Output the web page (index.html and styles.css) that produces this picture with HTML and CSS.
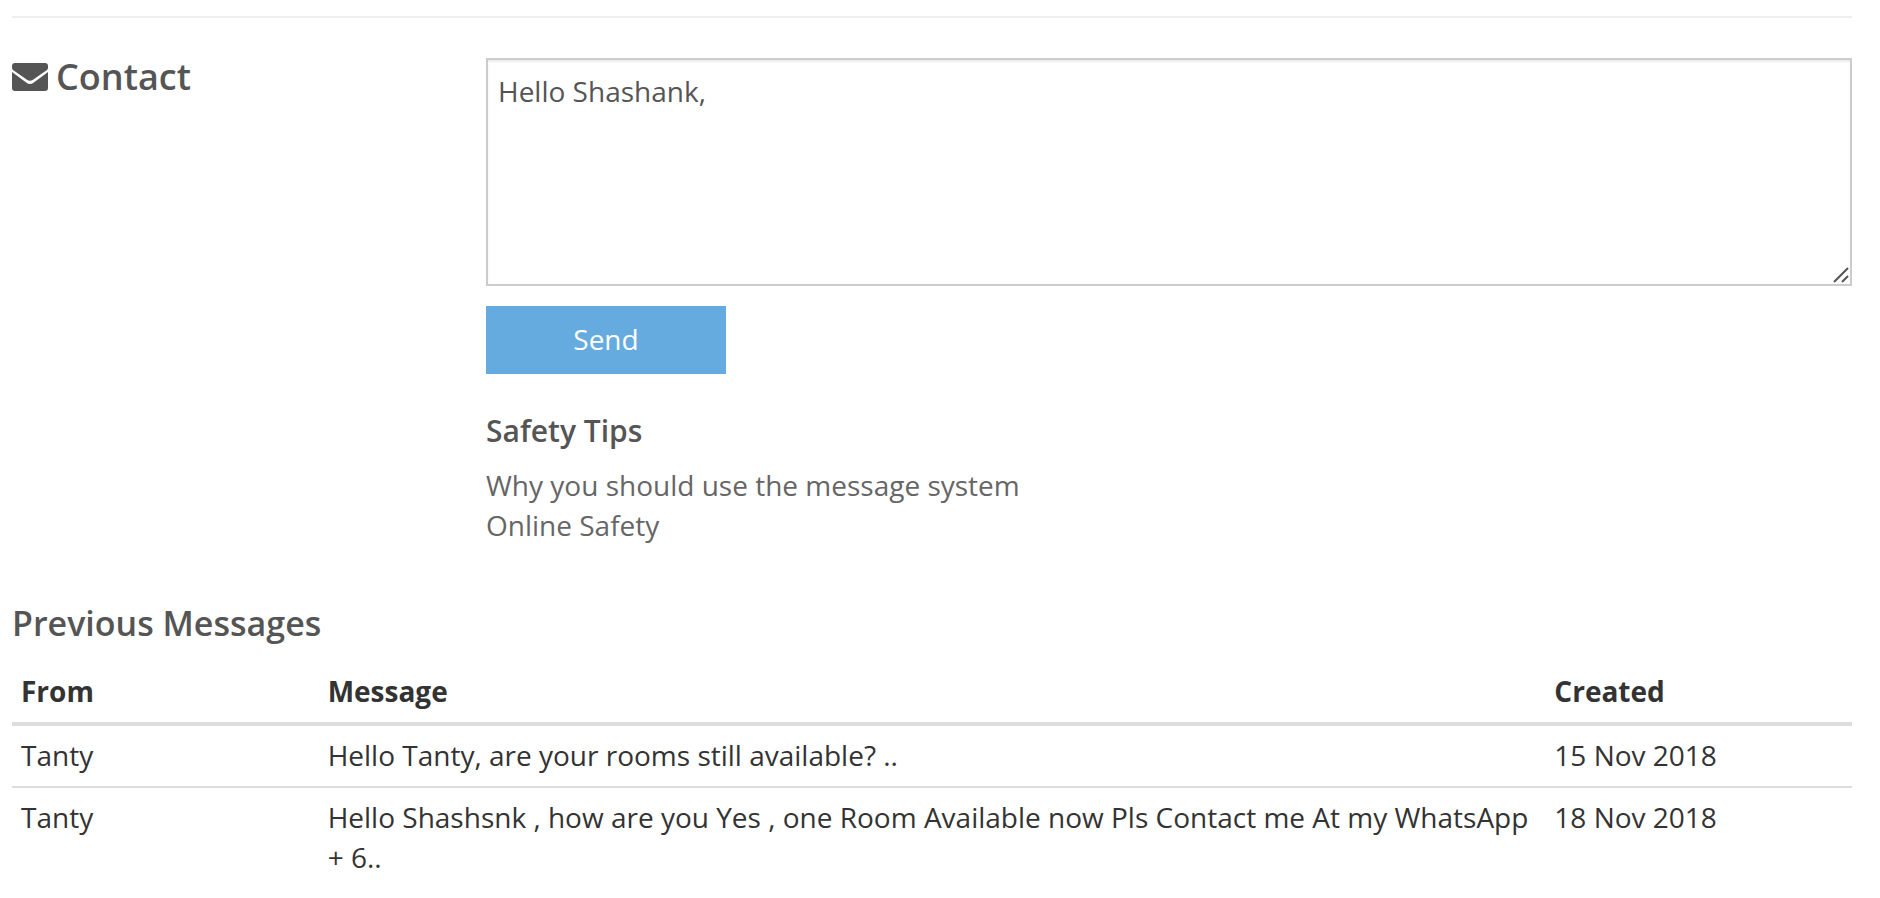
FILE: index.html
```
<!DOCTYPE html>
<html lang="en">
  <head>
    <meta charset="utf-8" />
    <meta name="viewport" content="width=device-width, initial-scale=1.0" />
    <title>Contact</title>
    <link rel="stylesheet" href="styles.css">
  </head>
  <body>
    <hr>
    <section class="contact">
      <h3 class="contact-title">
        <svg class="icon" viewBox="0 0 36 28" aria-hidden="true">
          <path d="M0 5V3Q0 0 3 0H33Q36 0 36 3V5Q36 6.200 35 7L21 16.800Q18 18.800 15 16.800L1 7Q0 6.200 0 5Z"/>
          <path d="M0 9L14.500 19.800Q18 22.200 21.500 19.800L36 9V25Q36 28 33 28H3Q0 28 0 25Z"/>
        </svg>
        <label for="message">Contact</label>
      </h3>
      <div class="contact-body">
        <form>
          <div class="field">
            <textarea id="message" name="message">Hello Shashank,</textarea>
            <svg class="grip" viewBox="0 0 16 16" aria-hidden="true">
              <path d="M1 15L15 1M9 15L15 9"/>
            </svg>
          </div>
          <button type="button" class="btn">Send</button>
        </form>
        <h4>Safety Tips</h4>
        <ul class="tips">
          <li><a href="#">Why you should use the message system</a></li>
          <li><a href="#">Online Safety</a></li>
        </ul>
      </div>
    </section>

    <section class="messages">
      <h3>Previous Messages</h3>
      <table>
        <thead>
          <tr>
            <th class="col-from">From</th>
            <th class="col-message">Message</th>
            <th class="col-created">Created</th>
          </tr>
        </thead>
        <tbody>
          <tr>
            <td>Tanty</td>
            <td>Hello Tanty, are your rooms still available? ..</td>
            <td>15 Nov 2018</td>
          </tr>
          <tr>
            <td>Tanty</td>
            <td>Hello Shashsnk , how are you Yes , one Room Available now Pls Contact me At my WhatsApp + 6..</td>
            <td>18 Nov 2018</td>
          </tr>
        </tbody>
      </table>
    </section>
  </body>
</html>
```
FILE: styles.css
```
* {
  box-sizing: border-box;
}
body {
  margin: 0;
  padding: 16px 28px 0 12px;
  font-family: "Open Sans", sans-serif;
  font-size: 28px;
  line-height: 40px;
  color: #333;
  background: #fff;
}
hr {
  margin: 0 0 40px;
  border: 0;
  border-top: 2px solid #eee;
}
h3,
h4 {
  margin: 0;
  font-weight: 600;
  color: #555;
}
h3 {
  font-size: 34px;
}
h4 {
  margin: 37px 0 14px;
  font-size: 30px;
}
.contact {
  display: grid;
  grid-template-columns: repeat(4, 1fr);
  column-gap: 56px;
}
.contact-title {
  display: flex;
  align-items: center;
  align-self: start;
  gap: 8px;
  font-size: 36px;
  line-height: 38px;
}
.icon {
  width: 36px;
  height: 28px;
  fill: #555;
}
.contact-body {
  grid-column: span 3;
}
.field {
  position: relative;
}
textarea {
  display: block;
  width: 100%;
  height: 228px;
  padding: 11px 10px;
  border: 2px solid #ccc;
  border-radius: 0;
  box-shadow: inset 0 2px 2px rgba(0, 0, 0, 0.075);
  font: inherit;
  color: #555;
  resize: vertical;
}
textarea::-webkit-resizer {
  background: transparent;
}
textarea:focus {
  outline: none;
  border-color: #66abe0;
}
/* resize handle drawn over the corner of the textarea */
.grip {
  position: absolute;
  right: 3px;
  bottom: 3px;
  width: 16px;
  height: 16px;
  fill: none;
  stroke: #555;
  stroke-width: 2;
  pointer-events: none;
}
.btn {
  display: block;
  width: 240px;
  height: 68px;
  margin-top: 20px;
  padding: 0 0 2px;
  border: none;
  font: inherit;
  color: #fff;
  background: #66abe0;
  cursor: pointer;
}
.tips {
  margin: 0;
  padding: 0;
  list-style: none;
}
.tips a {
  color: #666;
  text-decoration: none;
}
.tips a:hover {
  text-decoration: underline;
}
.messages {
  margin-top: 58px;
}
table {
  width: 100%;
  margin-top: 19px;
  border-collapse: collapse;
  table-layout: fixed;
}
th,
td {
  padding: 9px 9px 11px;
  text-align: left;
  vertical-align: top;
}
th {
  border-bottom: 4px solid #ddd;
}
td {
  border-top: 2px solid #ddd;
}
.col-from,
.col-created {
  width: 16.6667%;
}
```
